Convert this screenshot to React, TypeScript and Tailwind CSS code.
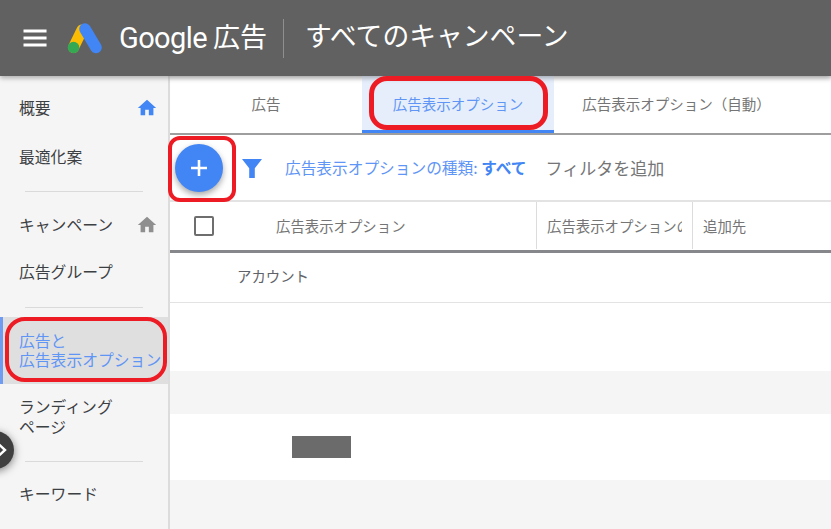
import { ReactNode } from "react";

const font = { fontFamily: '"Noto Sans CJK JP", "Noto Sans", sans-serif' };

const Divider = ({ className }: { className: string }) => (
  <div className={"mx-[25px] h-px bg-[#dadada] " + className} />
);

const NavItem = ({ children, className, icon }: { children: ReactNode; className: string; icon?: string }) => (
  <div className={"flex items-center justify-between pl-[19px] pr-[10px] text-[15.8px] leading-5 text-[#3c4043] " + className}>
    <span>{children}</span>
    {icon && (
      <svg width="22" height="22" viewBox="0 0 24 24" fill={icon} className="shrink-0">
        <path d="M10 20v-6h4v6h5v-8h3L12 3 2 12h3v8z" />
      </svg>
    )}
  </div>
);

const Logo = () => (
  <svg width="36" height="32" viewBox="0 0 36 32" className="mt-[-1px]">
    <path d="M15 8 L6.5 25.5" stroke="#fbbc04" strokeWidth="11" strokeLinecap="round" />
    <path d="M18 7 L29 25.5" stroke="#4285f4" strokeWidth="11.5" strokeLinecap="round" />
    <circle cx="6.5" cy="25.5" r="5.8" fill="#34a853" />
  </svg>
);

const Sidebar = () => (
  <aside className="relative w-[170px] shrink-0 border-r-2 border-[#dcdcdc] bg-[#f5f5f5]">
    <NavItem className="mt-[22px] h-5" icon="#4285f4">概要</NavItem>
    <NavItem className="mt-[29px] h-5">最適化案</NavItem>
    <Divider className="mt-[24px]" />
    <NavItem className="mt-[23px] h-5" icon="#8f8f8f">キャンペーン</NavItem>
    <NavItem className="mt-[27px] h-5">広告グループ</NavItem>
    <Divider className="mt-[25px]" />
    <div className="mt-[9px] h-[67px] whitespace-nowrap border-l-[3px] border-[#6f9cf0] bg-[#dfdfdf] pl-[16px] pt-[14px] text-[15.8px] leading-[19px] text-[#5f95f5]">
      広告と
      <br />
      広告表示オプション
    </div>
    <div className="mt-[13px] pl-[19px] text-[15.8px] leading-5 text-[#3c4043]">
      ランディング
      <br />
      ページ
    </div>
    <Divider className="mt-[24px]" />
    <NavItem className="mt-[22px] h-5">キーワード</NavItem>
    <div className="absolute left-[-24px] top-[355px] flex h-[38px] w-[38px] items-center justify-end rounded-full bg-[#3f3f3f] pr-[6px] shadow-[0_2px_8px_rgba(0,0,0,0.5)]">
      <svg width="12" height="14" viewBox="0 0 12 14" fill="none" stroke="#fff" strokeWidth="2.4">
        <path d="M3 1.5 L9 7 L3 12.5" />
      </svg>
    </div>
  </aside>
);

const Tabs = () => (
  <div className="flex h-[59px] shrink-0 border-b-2 border-[#9e9e9e] bg-white text-[14.5px] text-[#757575] shadow-[inset_0_6px_5px_-4px_rgba(0,0,0,0.12),0_2px_3px_rgba(0,0,0,0.12)]">
    <div className="flex w-[192px] items-center justify-center pb-[2px]">広告</div>
    <div className="flex w-[192px] items-center justify-center border-b-[3px] border-[#4285f4] bg-[#e6eefb] pt-[1px] text-[#5f95f5]">
      広告表示オプション
    </div>
    <div className="flex w-[245px] items-center justify-center pb-[2px]">広告表示オプション（自動）</div>
  </div>
);

const FilterBar = () => (
  <div className="flex h-[67px] shrink-0 items-center border-b-2 border-[#e3e3e3] bg-white">
    <div className="ml-[5px] flex h-12 w-12 items-center justify-center rounded-full bg-[#4285f4] shadow-[0_3px_6px_rgba(0,0,0,0.35)]">
      <svg width="18" height="18" viewBox="0 0 18 18" stroke="#fff" strokeWidth="2.6">
        <path d="M9 1v16M1 9h16" />
      </svg>
    </div>
    <svg width="22" height="22" viewBox="0 0 22 22" fill="#4285f4" className="ml-[18px]">
      <path d="M1 2h20l-7.2 9.2V21H8.2v-9.8z" />
    </svg>
    <span className="ml-[22px] text-[15.7px] text-[#5f95f5]">
      広告表示オプションの種類: <b className="font-bold text-[#4285f4]">すべて</b>
    </span>
    <span className="ml-[19px] text-[17px] text-[#757575]">フィルタを追加</span>
  </div>
);

const TableHead = () => (
  <div className="flex h-[51px] shrink-0 border-b-[3px] border-[#85878a] bg-white pb-[1px] text-[14.4px] text-[#757575]">
    <div className="flex w-[367px] items-center border-r border-[#dcdcdc]">
      <div className="ml-[24px] h-[20px] w-[20px] rounded-[2px] border-2 border-[#6e6e6e]" />
      <span className="ml-[62px]">広告表示オプション</span>
    </div>
    <div className="flex w-[156px] items-center overflow-hidden whitespace-nowrap border-r border-[#dcdcdc] px-[10px]">
      <span className="overflow-hidden">広告表示オプションの</span>
    </div>
    <div className="flex items-center pl-[10px]">追加先</div>
  </div>
);

export default function App() {
  return (
    <div className="relative flex h-[529px] w-[831px] flex-col overflow-hidden bg-white" style={font}>
      <header className="relative z-10 flex h-[76px] shrink-0 items-center bg-[#616161] text-white shadow-[0_2px_5px_rgba(0,0,0,0.3)]">
        <svg width="24" height="24" viewBox="0 0 24 24" fill="#fff" className="ml-[23px]">
          <path d="M0 3.5h24v3H0zM0 10.5h24v3H0zM0 17.5h24v3H0z" transform="translate(0.5 0) scale(0.96 1)" />
        </svg>
        <div className="ml-[20px]">
          <Logo />
        </div>
        <span className="ml-[16px] mt-[2px] text-[29px] tracking-[-0.6px]" style={{ fontFamily: "Roboto, sans-serif" }}>
          Google
        </span>
        <span className="ml-[6px] mt-[-5px] text-[27px] leading-none">広告</span>
        <div className="ml-4 h-[39px] w-px bg-[#8f8f8f]" />
        <span className="ml-[21px] mt-[-5px] text-[26.8px] leading-none">すべてのキャンペーン</span>
      </header>
      <div className="flex min-h-0 flex-1">
        <Sidebar />
        <main className="flex min-w-0 flex-1 flex-col">
          <Tabs />
          <FilterBar />
          <TableHead />
          <div className="flex h-[50px] shrink-0 items-center border-b border-[#e3e3e3] pb-[3px] pl-[67px] text-[14.4px] text-[#5f6368]">
            アカウント
          </div>
          <div className="h-[68px] shrink-0 bg-white" />
          <div className="h-[43px] shrink-0 bg-[#f5f5f5]" />
          <div className="flex h-[66px] shrink-0 items-center bg-white pl-[122px]">
            <div className="h-[22px] w-[59px] bg-[#6b6b6b]" />
          </div>
          <div className="flex-1 bg-[#f5f5f5]" />
        </main>
      </div>

      {/* red annotations */}
      <div className="absolute left-[369px] top-[76px] z-20 h-[54px] w-[179px] rounded-[18px] border-[5px] border-[#ed1c24]" />
      <div className="absolute left-[168px] top-[136px] z-20 h-[66px] w-[68px] rounded-[12px] border-[4px] border-[#ed1c24]" />
      <div className="absolute left-[5px] top-[317px] z-20 h-[65px] w-[162px] rounded-[20px] border-[4px] border-[#ed1c24]" />
    </div>
  );
}
